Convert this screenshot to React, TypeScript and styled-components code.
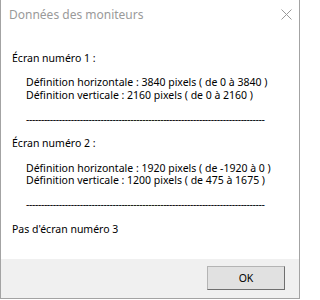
import React from "react";
import styled, { createGlobalStyle } from "styled-components";

const LINE = 12.2;

const GlobalStyle = createGlobalStyle`
  html, body {
    margin: 0;
    padding: 0;
    background: #ffffff;
    width: 301px;
    height: 300px;
    overflow: hidden;
  }
  * { box-sizing: border-box; }
`;

const Window = styled.div`
  width: 300px;
  height: 299px;
  border: 1px solid #a3a3a3;
  border-top: none;
  background: #ffffff;
  display: flex;
  flex-direction: column;
  font-family: "Noto Sans", "Open Sans", sans-serif;
`;

const TitleBar = styled.div`
  height: 30px;
  flex: none;
  display: flex;
  align-items: center;
  justify-content: space-between;
  padding: 0 7px 1px 8px;
`;

const Title = styled.span`
  font-size: 12px;
  color: #9a9a9a;
`;

const CloseIcon = styled.svg`
  width: 11px;
  height: 11px;
  display: block;
`;

const Content = styled.div`
  flex: 1;
  padding: 22px 0 0 11px;
  color: #000000;
  font-size: 10.5px;
  line-height: ${LINE}px;
`;

const Line = styled.div<{ $indent?: boolean; $skip?: number }>`
  height: ${LINE}px;
  white-space: nowrap;
  padding-left: ${(p) => (p.$indent ? 14 : 0)}px;
  margin-top: ${(p) => (p.$skip ?? 0) * LINE}px;
`;

const Dashes = styled.div<{ $skip?: number }>`
  height: ${LINE}px;
  margin-left: 14px;
  margin-top: ${(p) => (p.$skip ?? 0) * LINE}px;
  white-space: nowrap;
  letter-spacing: -0.4px;
`;

const Footer = styled.div`
  height: 39px;
  flex: none;
  background: #f0f0f0;
  display: flex;
  justify-content: flex-end;
  align-items: flex-start;
  padding: 7px 14px 0 0;
`;

const Button = styled.button`
  width: 78px;
  height: 24px;
  background: #e1e1e1;
  border: 1px solid;
  border-color: #b4b4b4 #6f6f6f #6f6f6f #b4b4b4;
  font-family: "Noto Sans", "Open Sans", sans-serif;
  font-size: 10.5px;
  color: #000;
  padding: 0;
  display: flex;
  align-items: center;
  justify-content: center;
`;

const DASHES = "-".repeat(80);

export default function App() {
  return (
    <>
      <GlobalStyle />
      <Window>
        <TitleBar>
          <Title>Données des moniteurs</Title>
          <CloseIcon viewBox="0 0 11 11">
            <path d="M0.5 0.5 L10.5 10.5 M10.5 0.5 L0.5 10.5" stroke="#9a9a9a" strokeWidth="1" fill="none" />
          </CloseIcon>
        </TitleBar>
        <Content>
          <Line>Écran numéro 1 :</Line>
          <Line $indent $skip={1}>Définition horizontale : 3840 pixels ( de 0 à 3840 )</Line>
          <Line $indent>Définition verticale : 2160 pixels ( de 0 à 2160 )</Line>
          <Dashes $skip={1}>{DASHES}</Dashes>
          <Line $skip={1}>Écran numéro 2 :</Line>
          <Line $indent $skip={1}>Définition horizontale : 1920 pixels ( de -1920 à 0 )</Line>
          <Line $indent>Définition verticale : 1200 pixels ( de 475 à 1675 )</Line>
          <Dashes $skip={1}>{DASHES}</Dashes>
          <Line $skip={1}>Pas d'écran numéro 3</Line>
        </Content>
        <Footer>
          <Button>OK</Button>
        </Footer>
      </Window>
    </>
  );
}
